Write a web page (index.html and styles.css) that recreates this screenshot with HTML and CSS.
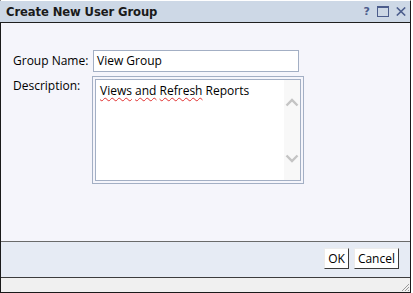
FILE: index.html
```html
<!DOCTYPE html>
<html>
<head>
<meta charset="utf-8">
<link rel="stylesheet" href="styles.css">
</head>
<body>
<div class="dialog">
  <div class="titlebar">
    <span class="title">Create New User Group</span>
    <span class="tools">
      <span class="help">?</span>
      <svg class="max" width="12" height="11" viewBox="0 0 12 11"><rect x="0.5" y="0.5" width="11" height="10" fill="none" stroke="#4c5d8c"/><rect x="0" y="0" width="12" height="2" fill="#4c5d8c"/></svg>
      <svg class="close" width="10" height="9" viewBox="0 0 10 9"><path d="M0.8 0.5L9.2 8.5M9.2 0.5L0.8 8.5" stroke="#4c5d8c" stroke-width="1.6"/></svg>
    </span>
  </div>
  <div class="content">
    <div class="row">
      <span class="label">Group Name:</span>
      <div class="input">View Group</div>
    </div>
    <div class="row row-desc">
      <span class="label">Description:</span>
      <div class="ta-outer">
        <div class="ta-inner">
          <div class="ta-text"><span class="sp">Views</span> <span class="sp">and</span> <span class="sp">Refresh</span> Reports</div>
          <div class="scroll">
            <svg width="14" height="9" viewBox="0 0 14 9"><path d="M1.5 7.5L7 2L12.5 7.5" fill="none" stroke="#c4c4c4" stroke-width="2.4"/></svg>
            <svg width="14" height="9" viewBox="0 0 14 9"><path d="M1.5 1.5L7 7L12.5 1.5" fill="none" stroke="#c4c4c4" stroke-width="2.4"/></svg>
          </div>
        </div>
      </div>
    </div>
  </div>
  <div class="footer">
    <button class="btn">OK</button>
    <button class="btn">Cancel</button>
  </div>
  <div class="status">
    <svg class="grip" width="10" height="10" viewBox="0 0 10 10"><path d="M9 2L2 9M9 5L5 9M9 8L8 9" stroke="#9a9a9a" stroke-width="1"/></svg>
  </div>
</div>
</body>
</html>
```
FILE: styles.css
```css
html, body {
  margin: 0;
  padding: 0;
  background: #ffffff;
}
body {
  width: 413px;
  height: 293px;
  font-family: "Open Sans", "Noto Sans", sans-serif;
  font-size: 12px;
  color: #000;
}
.dialog {
  box-sizing: border-box;
  width: 411px;
  height: 293px;
  border: 1px solid #1a1a1a;
  border-top: 1px solid #ffffff;
  display: flex;
  flex-direction: column;
  background: #f5f5fb;
}
.titlebar {
  height: 21px;
  flex: none;
  background: #cdd8e6;
  border-bottom: 1px solid #1f1f1f;
  display: flex;
  align-items: center;
  justify-content: space-between;
  padding: 0 4px 0 6px;
  margin-left: -1px;
}
.title {
  font-family: "DejaVu Sans", sans-serif;
  font-weight: bold;
  font-size: 11.6px;
  color: #1a1a1a;
  letter-spacing: -0.1px;
}
.tools {
  display: flex;
  align-items: center;
  gap: 7px;
}
.help {
  font-family: "DejaVu Sans", sans-serif;
  font-weight: bold;
  font-size: 11px;
  color: #4c5d8c;
}
.content {
  flex: 1;
  padding: 27px 0 0 12px;
  display: flex;
  flex-direction: column;
  gap: 4px;
}
.row {
  display: flex;
  align-items: center;
}
.row-desc {
  align-items: flex-start;
}
.label {
  width: 80px;
  line-height: 20px;
}
.input {
  box-sizing: border-box;
  width: 206px;
  height: 22px;
  border: 1px solid #a3afc4;
  background: #fff;
  padding: 0 3px;
  line-height: 20px;
}
.ta-outer {
  box-sizing: border-box;
  width: 212px;
  height: 108px;
  margin-left: -1px;
  border: 1px solid #a3afc4;
  padding: 2px;
}
.ta-inner {
  box-sizing: border-box;
  height: 100%;
  border: 1px solid #a3afc4;
  background: #fff;
  display: flex;
}
.ta-text {
  flex: 1;
  padding: 3px 0 0 4px;
  line-height: 16px;
}
.sp {
  text-decoration: underline wavy #e03030;
  text-decoration-thickness: 1px;
  text-underline-offset: 2px;
}
.scroll {
  width: 16px;
  background: #f8f8f8;
  display: flex;
  flex-direction: column;
  justify-content: space-between;
  align-items: center;
  padding: 18px 0 17px;
}
.footer {
  box-sizing: border-box;
  flex: none;
  height: 37px;
  background: #e6ebf4;
  border-top: 1px solid #6a6a6a;
  border-bottom: 1px solid #3c3c3c;
  display: flex;
  justify-content: flex-end;
  align-items: flex-start;
  gap: 5px;
  padding: 6px 11px 0 0;
}
.btn {
  box-sizing: border-box;
  height: 21px;
  padding: 0 3px;
  font-family: "Open Sans", "Noto Sans", sans-serif;
  font-size: 12px;
  background: #fff;
  border: 1px solid;
  border-color: #ececec #3a3a3a #3a3a3a #ececec;
  color: #000;
  line-height: 18px;
}
.status {
  flex: none;
  height: 14px;
  background: #f0f0f0;
  display: flex;
  justify-content: flex-end;
  align-items: flex-end;
}
.grip {
  display: block;
}
```
